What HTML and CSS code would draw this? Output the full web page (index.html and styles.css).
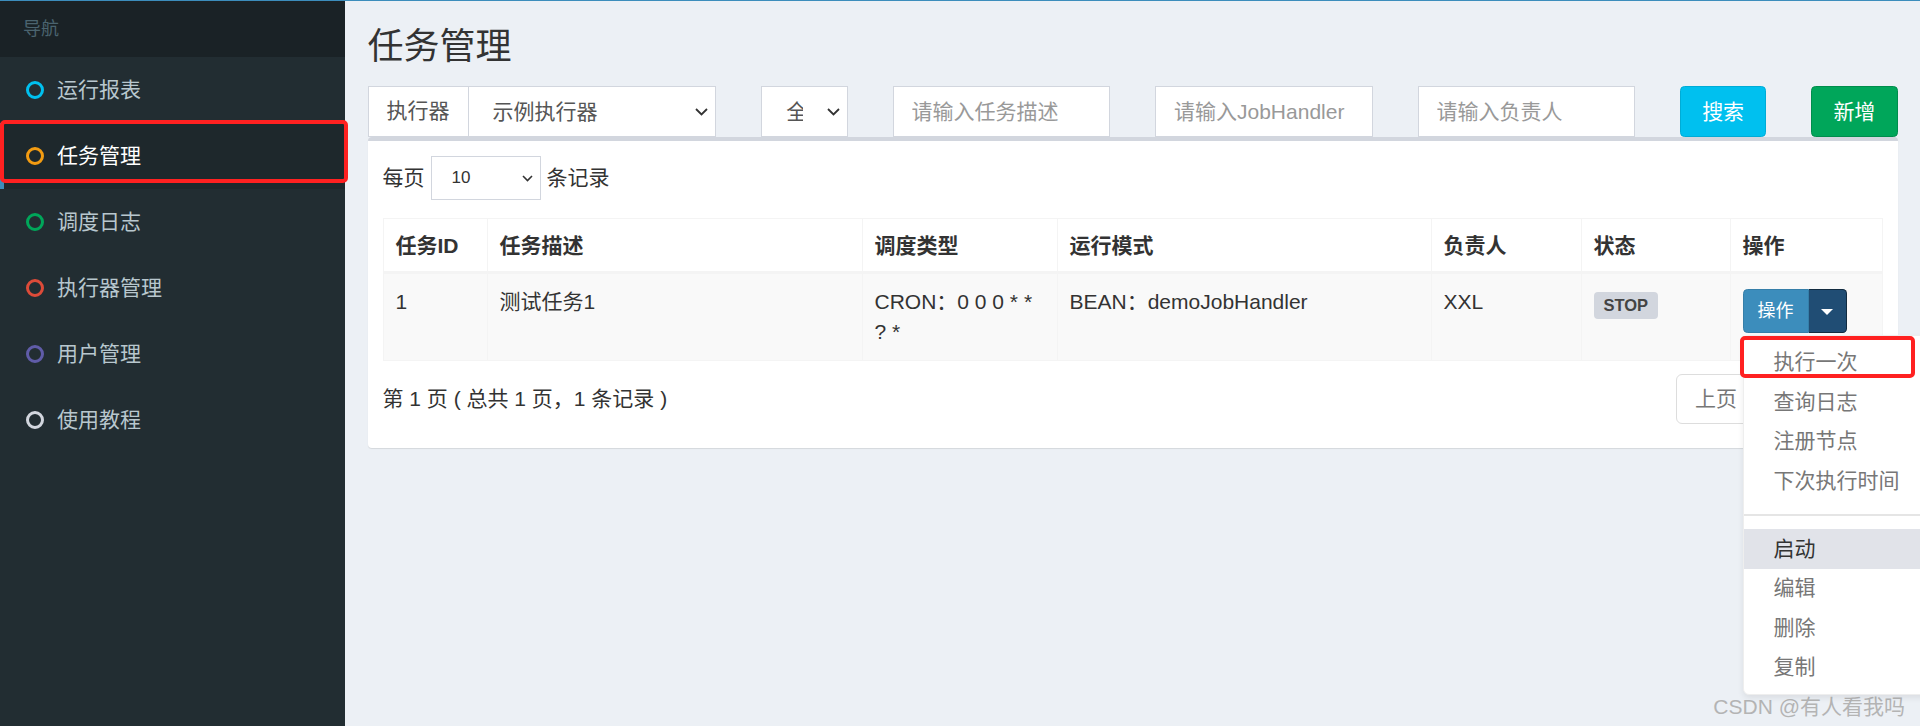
FILE: index.html
```html
<!DOCTYPE html>
<html lang="zh-CN">
<head>
  <meta charset="UTF-8">
  <meta name="viewport" content="width=device-width, initial-scale=1.0">
  <title>任务管理</title>
  <link rel="stylesheet" href="styles.css">
</head>
<body>
  <div class="wrapper">
    <aside class="sidebar">
      <div class="sidebar-header">导航</div>
      <ul class="sidebar-menu">
        <li><span class="ring ring-aqua"></span>运行报表</li>
        <li class="active"><span class="ring ring-yellow"></span>任务管理</li>
        <li><span class="ring ring-green"></span>调度日志</li>
        <li><span class="ring ring-red"></span>执行器管理</li>
        <li><span class="ring ring-purple"></span>用户管理</li>
        <li><span class="ring ring-gray"></span>使用教程</li>
      </ul>
      <div class="mark mark-nav"></div>
    </aside>

    <main class="content-wrapper">
      <section class="content-header">
        <h1>任务管理</h1>
      </section>

      <section class="content">
        <div class="filters">
          <div class="input-group col-3">
            <span class="addon">执行器</span>
            <div class="select">
              <span class="value">示例执行器</span>
              <svg width="13" height="8" viewBox="0 0 13 8"><path d="M1 1l5.5 5.5L12 1" fill="none" stroke="#333" stroke-width="1.8"/></svg>
            </div>
          </div>
          <div class="select col-1">
            <span class="value">全部</span>
            <svg width="13" height="8" viewBox="0 0 13 8"><path d="M1 1l5.5 5.5L12 1" fill="none" stroke="#333" stroke-width="1.8"/></svg>
          </div>
          <input class="input col-2" type="text" placeholder="请输入任务描述">
          <input class="input col-2" type="text" placeholder="请输入JobHandler">
          <input class="input col-2" type="text" placeholder="请输入负责人">
          <button class="btn btn-info col-1">搜索</button>
          <button class="btn btn-success col-1">新增</button>
        </div>

        <div class="box">
          <div class="length">
            <span>每页</span>
            <div class="select select-sm">
              <span class="value">10</span>
              <svg width="11" height="7" viewBox="0 0 11 7"><path d="M1 1l4.5 4.5L10 1" fill="none" stroke="#333" stroke-width="1.6"/></svg>
            </div>
            <span>条记录</span>
          </div>

          <table class="table">
            <colgroup>
              <col style="width:104px">
              <col style="width:375px">
              <col style="width:195px">
              <col style="width:374px">
              <col style="width:150px">
              <col style="width:149px">
              <col style="width:152px">
            </colgroup>
            <thead>
              <tr>
                <th>任务ID</th>
                <th>任务描述</th>
                <th>调度类型</th>
                <th>运行模式</th>
                <th>负责人</th>
                <th>状态</th>
                <th>操作</th>
              </tr>
            </thead>
            <tbody>
              <tr>
                <td>1</td>
                <td>测试任务1</td>
                <td>CRON：0 0 0 * * ? *</td>
                <td>BEAN：demoJobHandler</td>
                <td>XXL</td>
                <td><span class="label">STOP</span></td>
                <td>
                  <div class="btn-group">
                    <button class="btn-sm btn-primary">操作</button>
                    <button class="btn-sm btn-toggle"><span class="caret"></span></button>
                    <ul class="dropdown-menu">
                      <li><a>执行一次</a></li>
                      <li><a>查询日志</a></li>
                      <li><a>注册节点</a></li>
                      <li><a>下次执行时间</a></li>
                      <li class="divider"></li>
                      <li class="hover"><a>启动</a></li>
                      <li><a>编辑</a></li>
                      <li><a>删除</a></li>
                      <li><a>复制</a></li>
                      <div class="mark mark-menu"></div>
                    </ul>
                  </div>
                </td>
              </tr>
            </tbody>
          </table>

          <div class="table-footer">
            <div class="info">第 1 页 ( 总共 1 页，1 条记录 )</div>
            <ul class="pagination">
              <li class="disabled"><a>上页</a></li>
              <li class="disabled"><a>下页</a></li>
            </ul>
          </div>
        </div>
      </section>
    </main>

    <div class="watermark">CSDN @有人看我吗</div>
  </div>
</body>
</html>
```

FILE: styles.css
```css
* {
  box-sizing: border-box;
}

html, body {
  margin: 0;
  height: 100%;
}

body {
  font-family: "Liberation Sans", "Noto Sans CJK SC", sans-serif;
  font-size: 21px;
  line-height: 30px;
  color: #333;
  background: #ecf0f5;
  overflow: hidden;
}

.wrapper {
  display: flex;
  height: 726px;
  border-top: 1px solid #3c8dbc;
  position: relative;
}

/* sidebar */
.sidebar {
  width: 345px;
  flex: none;
  background: #222d32;
  position: relative;
  z-index: 2;
}

.sidebar-header {
  height: 56px;
  background: #1a2226;
  color: #4b646f;
  font-size: 18px;
  line-height: 56px;
  padding-left: 23px;
}

.sidebar-menu {
  list-style: none;
  margin: 0;
  padding: 0;
}

.sidebar-menu li {
  height: 66px;
  display: flex;
  align-items: center;
  padding-left: 26px;
  color: #b8c7ce;
}

.sidebar-menu li.active {
  background: #1e282c;
  border-left: 4px solid #3c8dbc;
  padding-left: 22px;
  color: #fff;
}

.ring {
  width: 18px;
  height: 18px;
  border: 3px solid;
  border-radius: 50%;
  margin-right: 13px;
}

.ring-aqua { border-color: #00c0ef; }
.ring-yellow { border-color: #f39c12; }
.ring-green { border-color: #00a65a; }
.ring-red { border-color: #dd4b39; }
.ring-purple { border-color: #605ca8; }
.ring-gray { border-color: #d2d6de; }

/* red annotation boxes */
.mark {
  position: absolute;
  border: 4px solid #ff2121;
  border-radius: 5px;
  pointer-events: none;
}

.mark-nav {
  left: 0;
  top: 119px;
  width: 348px;
  height: 63px;
}

/* content */
.content-wrapper {
  flex: 1;
  min-width: 0;
}

.content-header {
  padding: 26px 22.5px 0;
}

.content-header h1 {
  margin: 0;
  font-size: 36px;
  line-height: 40px;
  font-weight: normal;
  color: #333;
}

.content {
  padding: 19px 22.5px;
}

.filters {
  display: grid;
  grid-template-columns: repeat(12, minmax(0, 1fr));
  column-gap: 45px;
  height: 51px;
}

.col-1 { grid-column: span 1; }
.col-2 { grid-column: span 2; }
.col-3 { grid-column: span 3; }

.input-group {
  display: flex;
  min-width: 0;
}

.addon {
  width: 100px;
  flex: none;
  background: #fff;
  border: 1.5px solid #d2d6de;
  border-right: none;
  color: #555;
  text-align: center;
  line-height: 48px;
}

.select {
  flex: 1;
  min-width: 0;
  display: flex;
  align-items: center;
  height: 51px;
  background: #fff;
  border: 1.5px solid #d2d6de;
  padding: 0 7px 0 24px;
  color: #555;
}

.select .value {
  flex: 1;
  min-width: 0;
  overflow: hidden;
  white-space: nowrap;
  margin-right: 24px;
}

.select svg {
  flex: none;
}

.input {
  height: 51px;
  border: 1.5px solid #d2d6de;
  border-radius: 0;
  padding: 0 18px;
  font: inherit;
  color: #555;
  background: #fff;
  min-width: 0;
  width: 100%;
}

.input::placeholder {
  color: #999;
}

.btn {
  height: 51px;
  min-width: 0;
  border-radius: 4.5px;
  font: inherit;
  color: #fff;
  cursor: pointer;
}

.btn-info {
  background: #00c0ef;
  border: 1.5px solid #00acd6;
}

.btn-success {
  background: #00a65a;
  border: 1.5px solid #008d4c;
}

/* box */
.box {
  background: #fff;
  border-top: 4px solid #d2d6de;
  border-radius: 4px;
  box-shadow: 0 1px 1px rgba(0, 0, 0, 0.1);
  padding: 15px 15px 24px;
}

.length {
  display: flex;
  align-items: center;
  gap: 6px;
  height: 44px;
}

.select-sm {
  flex: none;
  width: 110px;
  height: 44px;
  font-size: 17px;
  padding: 0 7px 0 20px;
  color: #333;
}

.select-sm .value {
  margin-right: 0;
}

.table {
  width: 100%;
  margin-top: 18px;
  border-collapse: collapse;
  table-layout: fixed;
  border: 1.5px solid #f4f4f4;
}

.table th,
.table td {
  padding: 12px;
  border: 1.5px solid #f4f4f4;
  text-align: left;
  vertical-align: top;
}

.table th {
  font-weight: bold;
  padding-bottom: 10px;
  border-bottom-width: 3px;
}

.table td {
  padding-top: 13px;
  padding-bottom: 13px;
}

.table tbody tr {
  background: #f9f9f9;
}

.label {
  display: inline-block;
  margin-top: 5px;
  padding: 4px 10px 5px;
  font-size: 16.5px;
  line-height: 18px;
  font-weight: bold;
  color: #444;
  background: #d2d6de;
  border-radius: 4px;
}

.btn-group {
  position: relative;
  display: flex;
  margin-top: 2px;
}

.btn-sm {
  height: 44px;
  font: inherit;
  font-size: 18px;
  color: #fff;
  cursor: pointer;
}

.btn-primary {
  width: 66px;
  background: #3c8dbc;
  border: 1.5px solid #367fa9;
  border-radius: 4.5px 0 0 4.5px;
  padding: 0;
}

.btn-toggle {
  width: 38px;
  background: #204d74;
  border: 1.5px solid #122b40;
  border-left: none;
  border-radius: 0 4.5px 4.5px 0;
  padding: 0;
}

.caret {
  display: inline-block;
  border-top: 6px solid #fff;
  border-left: 6px solid transparent;
  border-right: 6px solid transparent;
  vertical-align: middle;
}

.dropdown-menu {
  position: absolute;
  top: 100%;
  left: 0;
  margin: 2px 0 0;
  min-width: 240px;
  padding: 6.5px 0;
  list-style: none;
  background: #fff;
  border: 1.5px solid #eee;
  border-radius: 6px;
  box-shadow: 0 3px 6px rgba(0, 0, 0, 0.08);
  z-index: 5;
}

.dropdown-menu li a {
  display: block;
  padding: 4.75px 30px;
  color: #777;
  white-space: nowrap;
}

.dropdown-menu li.hover a {
  background: #e1e3e9;
  color: #333;
}

.dropdown-menu .divider {
  height: 1.5px;
  margin: 13.5px 0;
  background: #e5e5e5;
}

.mark-menu {
  left: -4px;
  top: 0;
  width: 175px;
  height: 42px;
}

.table-footer {
  display: flex;
  justify-content: space-between;
  align-items: center;
  margin-top: 12px;
  height: 51px;
}

.pagination {
  display: flex;
  list-style: none;
  margin: 0;
  padding: 0;
}

.pagination li a {
  display: block;
  padding: 9px 18px;
  border: 1.5px solid #ddd;
  margin-left: -1.5px;
  background: #fff;
  color: #777;
  white-space: nowrap;
}

.pagination li:first-child a {
  border-radius: 6px 0 0 6px;
}

.pagination li:last-child a {
  border-radius: 0 6px 6px 0;
  margin-right: 48px;
}

.watermark {
  position: absolute;
  right: 15px;
  bottom: 7px;
  font-size: 21px;
  line-height: 24px;
  color: #b4b4b4;
}
```
